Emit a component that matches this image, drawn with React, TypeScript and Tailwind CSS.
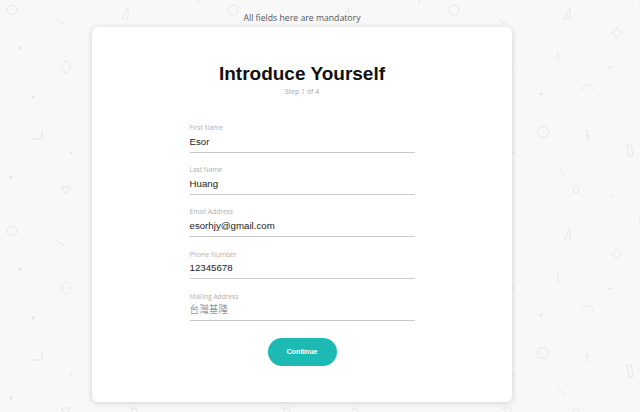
import React from 'react';

const fields = [
  { label: 'First Name', value: 'Esor' },
  { label: 'Last Name', value: 'Huang' },
  { label: 'Email Address', value: 'esorhjy@gmail.com' },
  { label: 'Phone Number', value: '12345678' },
  { label: 'Mailing Address', value: '台灣基隆', cjk: true },
];

const BackgroundPattern = () => (
  <svg className="absolute inset-0 w-full h-full" aria-hidden="true">
    <defs>
      <pattern id="confetti" width="221" height="221" patternUnits="userSpaceOnUse">
        <g fill="none" stroke="#e6e6e6" strokeWidth="1">
          <circle cx="12" cy="10" r="5" />
          <line x1="57" y1="20" x2="65" y2="25" />
          <polygon points="128,7 128,19 122,19" />
          <polygon points="66,60 71,67 66,74 61,67" />
          <polyline points="42,130 42,139 32,139" />
          <polygon points="61,187 70,187 66,194" />
          <polygon points="175,28 180,33 175,38 170,33" />
          <line x1="115" y1="52" x2="117" y2="62" />
          <line x1="165" y1="68" x2="171" y2="67" />
          <path d="M140 90 A5.5 5.5 0 0 1 151 90" />
          <polygon points="107,132 104,137.2 98,137.2 95,132 98,126.8 104,126.8" />
          <path d="M146 130 L144 136 L147 135 L145 141" />
          <rect x="186" y="144" width="4" height="12" transform="rotate(-8 188 150)" />
          <line x1="116" y1="167" x2="123" y2="175" />
          <circle cx="134" cy="190" r="3" />
          <line x1="198" y1="0" x2="198" y2="4" />
          <line x1="198" y1="217" x2="198" y2="221" />
        </g>
        <g fill="#e6e6e6">
          <circle cx="20" cy="48" r="1.6" />
          <rect x="31.5" y="95.5" width="3" height="3" transform="rotate(15 33 97)" />
          <circle cx="71" cy="153" r="1" />
          <rect x="9.5" y="175.5" width="3" height="3" transform="rotate(15 11 177)" />
          <polygon points="97,93 101,93 99,96" />
          <circle cx="171" cy="196" r="1" />
        </g>
      </pattern>
    </defs>
    <rect width="100%" height="100%" fill="url(#confetti)" />
  </svg>
);

export default function App() {
  return (
    <div className="relative w-[640px] h-[412px] overflow-hidden bg-[#f8f8f8]">
      <BackgroundPattern />

      <div className="relative w-[420px] ml-[92px]">
        <p className="h-[27px] pt-[12px] text-center text-[8.7px] leading-[12px] text-[#555] font-['Open_Sans',sans-serif]">
          All fields here are mandatory
        </p>

        <div className="bg-white rounded-[6px] shadow-[0_1px_6px_rgba(0,0,0,0.16)] pt-[36px] pb-[36px] flex flex-col items-center">
          <h1 className="text-[19px] leading-[22px] font-bold text-[#111] font-['Liberation_Sans',Arial,sans-serif]">
            Introduce Yourself
          </h1>
          <p className="mt-[2px] text-[7px] leading-[10px] text-[#a8a8a8] font-['Open_Sans',sans-serif]">
            Step 1 of 4
          </p>

          <div className="mt-[26px] w-[225px] flex flex-col gap-[12.5px]">
            {fields.map((f) => (
              <div key={f.label} className="border-b border-[#c9c9c9] pb-[3px]">
                <label className="block h-[9px] text-[6.6px] leading-[9px] text-[#b0b0b0] font-['Open_Sans',sans-serif]">
                  {f.label}
                </label>
                <div
                  className={`mt-[2.7px] text-[9.7px] leading-[14px] font-['Liberation_Sans','Noto_Sans_CJK_TC',sans-serif] ${
                    f.cjk ? 'text-[#6a6a6a] font-light' : 'text-[#222]'
                  }`}
                >
                  {f.value}
                </div>
              </div>
            ))}
          </div>

          <button className="mt-[16.5px] w-[69px] h-[28px] rounded-full bg-[#1dbab3] text-white text-[7.2px] font-bold font-['Liberation_Sans',Arial,sans-serif]">
            Continue
          </button>
        </div>
      </div>
    </div>
  );
}
